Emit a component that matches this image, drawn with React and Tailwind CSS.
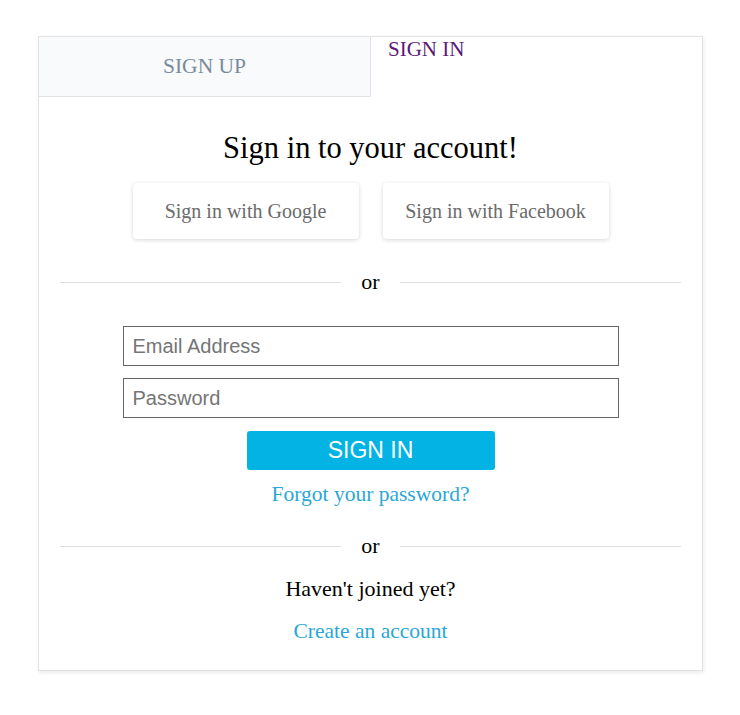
export default function App() {
  return (
    <div className="min-h-[715px] w-[740px] bg-white pt-[36px] font-['Liberation_Serif',serif]">
      <div className="ml-[38px] w-[665px] border border-[#e3e3e3] bg-white shadow-[1px_2px_4px_rgba(0,0,0,0.08)]">
        <div className="flex h-[60px]">
          <div className="flex w-[332px] items-center justify-center border-r border-b border-[#dfe3e8] bg-[#f8fafc] text-[21.5px] text-[#7b8b9c]">
            SIGN UP
          </div>
          <div className="flex-1 pl-[17px] text-[21px] leading-[24px] text-[#5c1a77]">
            SIGN IN
          </div>
        </div>

        <div className="flex flex-col items-center px-[21px] pb-[26px]">
          <h1 className="mt-[32px] text-[30.5px] leading-[38px] text-black">Sign in to your account!</h1>

          <div className="mt-[16px] flex gap-[24px]">
            <button className="h-[56px] w-[226px] rounded-[4px] bg-white text-[20px] text-[#6b6b6b] shadow-[0_1px_4px_rgba(0,0,0,0.16)]">
              Sign in with Google
            </button>
            <button className="h-[56px] w-[226px] rounded-[4px] bg-white text-[20px] text-[#6b6b6b] shadow-[0_1px_4px_rgba(0,0,0,0.16)]">
              Sign in with Facebook
            </button>
          </div>

          <div className="mt-[30px] flex w-full items-center">
            <div className="h-px flex-1 bg-[#dedede]" />
            <span className="px-[20px] text-[22px] leading-[26px] text-black">or</span>
            <div className="h-px flex-1 bg-[#dedede]" />
          </div>

          <div className="mt-[31px] flex w-[496px] flex-col gap-[12px]">
            <input
              placeholder="Email Address"
              className="h-[40px] w-full border border-[#666666] px-[9px] font-['Liberation_Sans',sans-serif] text-[20px] placeholder:text-[#757575]"
            />
            <input
              type="password"
              placeholder="Password"
              className="h-[40px] w-full border border-[#666666] px-[9px] font-['Liberation_Sans',sans-serif] text-[20px] placeholder:text-[#757575]"
            />
          </div>

          <button className="mt-[13px] h-[39px] w-[248px] rounded-[3px] bg-[#02b3e4] font-['Liberation_Sans',sans-serif] text-[23px] text-white">
            SIGN IN
          </button>

          <a href="#" className="mt-[11px] text-[21.5px] leading-[26px] text-[#2aa7d6]">Forgot your password?</a>

          <div className="mt-[26px] flex w-full items-center">
            <div className="h-px flex-1 bg-[#dedede]" />
            <span className="px-[20px] text-[22px] leading-[26px] text-black">or</span>
            <div className="h-px flex-1 bg-[#dedede]" />
          </div>

          <p className="mt-[17px] text-[22px] leading-[26px] text-black">Haven't joined yet?</p>
          <a href="#" className="mt-[16px] text-[21.5px] leading-[26px] text-[#2aa7d6]">Create an account</a>
        </div>
      </div>
    </div>
  );
}
